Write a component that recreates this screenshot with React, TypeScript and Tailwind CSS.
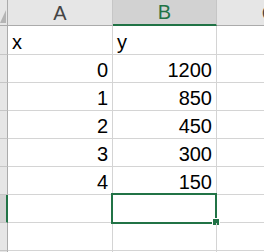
import React from "react";

const rows = [
  { n: 1, a: "x", b: "y", left: true },
  { n: 2, a: "0", b: "1200" },
  { n: 3, a: "1", b: "850" },
  { n: 4, a: "2", b: "450" },
  { n: 5, a: "3", b: "300" },
  { n: 6, a: "4", b: "150" },
  { n: 7, a: "", b: "", active: true },
  { n: 8, a: "", b: "" },
  { n: 9, a: "", b: "" },
];

export default function App() {
  return (
    <div
      className="w-[264px] h-[252px] overflow-hidden bg-white text-black"
      style={{ fontFamily: '"Liberation Sans", Arial, sans-serif' }}
    >
      {/* column headers */}
      <div className="flex h-[26px]">
        <div className="relative w-[8px] shrink-0 bg-[#e6e6e6] border-r border-b border-[#ababab]">
          <div
            className="absolute left-0 bottom-[2px] w-[6px] h-[13px] bg-[#b4b4b4]"
            style={{ clipPath: "polygon(100% 0, 100% 100%, 0 100%)" }}
          />
        </div>
        <div className="w-[105px] shrink-0 bg-[#e6e6e6] border-r border-b border-[#c6c6c6] border-b-[#ababab] flex items-end justify-center text-[20px] leading-[23px] text-[#444]">
          A
        </div>
        <div className="w-[104px] shrink-0 bg-[#d2d2d2] border-r border-[#c6c6c6] border-b-2 border-b-[#217346] flex items-end justify-center text-[20px] leading-[23px] text-[#217346]">
          B
        </div>
        <div className="w-[104px] shrink-0 bg-[#e6e6e6] border-b border-[#ababab] flex items-end justify-center text-[20px] leading-[23px] text-[#444]">
          C
        </div>
      </div>

      {rows.map((r) => (
        <div key={r.n} className={`flex ${r.n === 1 ? "h-[29px]" : "h-[28px]"}`}>
          <div
            className={`w-[8px] shrink-0 border-b border-[#c6c6c6] ${
              r.active
                ? "bg-[#d2d2d2] border-r-2 border-r-[#217346]"
                : "bg-[#e6e6e6] border-r border-r-[#ababab]"
            }`}
          />
          <div
            className={`w-[105px] shrink-0 border-r border-b border-[#d4d4d4] flex items-end px-[4px] text-[20px] leading-[23px] ${
              r.left ? "justify-start" : "justify-end"
            }`}
          >
            {r.a}
          </div>
          <div
            className={`relative w-[104px] shrink-0 border-r border-b border-[#d4d4d4] flex items-end px-[4px] text-[20px] leading-[23px] ${
              r.left ? "justify-start" : "justify-end"
            }`}
          >
            {r.b}
            {r.active && (
              <>
                <div className="absolute -left-[2px] -top-[2px] w-[106px] h-[31px] border-2 border-[#217346]" />
                <div className="absolute left-[100px] top-[24px] w-[6px] h-[6px] bg-[#217346] outline outline-1 outline-white" />
              </>
            )}
          </div>
          <div className="w-[104px] shrink-0 border-b border-[#d4d4d4]" />
        </div>
      ))}
    </div>
  );
}
